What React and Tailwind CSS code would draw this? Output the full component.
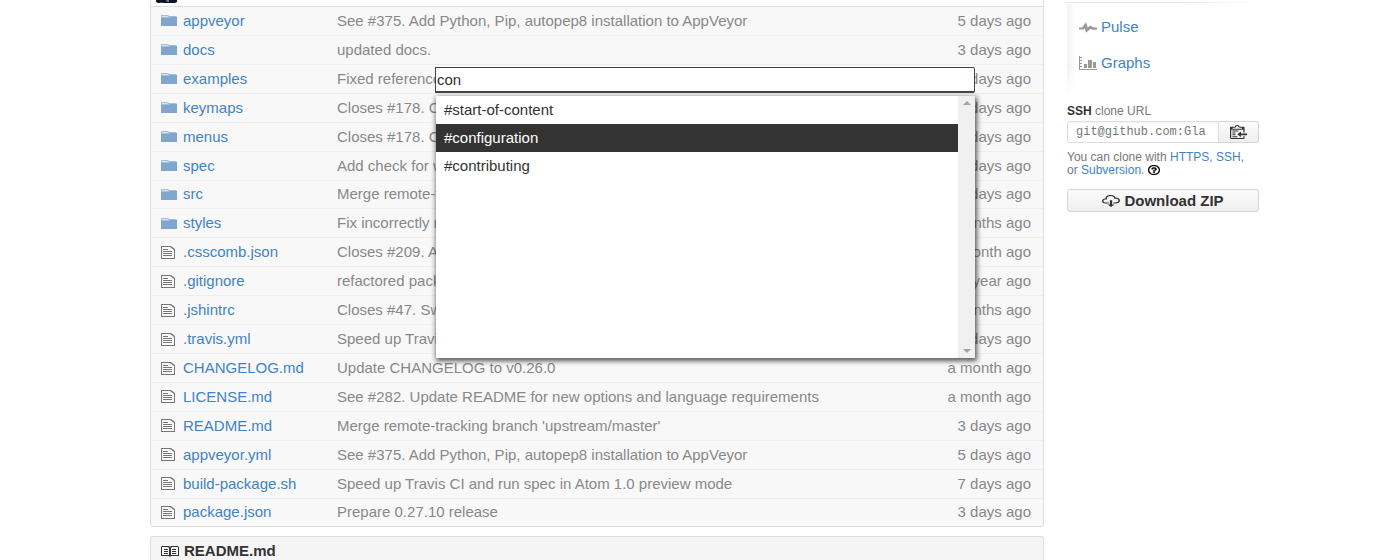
import React from "react";

const ICONS = {
  file: {
    box: "0 0 14 13",
    d: "M0 0h10l4 3v10H0zM1 1v11h12V4L9 1zM2 3h5v1H2zM2 5h9v1H2zM2 7h9v1H2zM2 9h9v1H2z",
  },
  pulse: {
    box: "0 1 14 13",
    d: "M11.5 7.5L8.8 5 6.8 7.6 5.5 1.2 2.4 7.5H0v2.3h3.7l.8-1.6.9 5.4L9 9l1.4 1.3H14V7.5h-2.5z",
  },
  graph: {
    box: "0 0 18 14",
    d: "M0 13h18v1H0zM0 0h1v13H0zM1 1h2v1H1zM1 4h2v1H1zM1 7h2v1H1zM1 10h2v1H1zM5 8h3v4H5zM9 4h4v8H9zM14 6h3v6h-3z",
  },
  book: {
    box: "0 0 18 11",
    d: "M1 0h7l1 1 1-1h7l1 1v9h-8l-1 1-1-1H0V1zM1 1v8h7V2L7 1zM10 2v7h7V1h-6zM3 3h4v1H3zM3 5h4v1H3zM3 7h4v1H3zM11 3h4v1h-4zM11 5h4v1h-4zM11 7h4v1h-4z",
  },
  clippy: {
    box: "0 1 14 15",
    d: "M2 13h4v1H2v-1zm5-6H2v1h5V7zm2 3V8l-3 3 3 3v-2h5v-2H9zM4.5 9H2v1h2.5V9zM2 12h2.5v-1H2v1zm9 1h1v2c-.02.28-.11.52-.3.7-.19.18-.42.28-.7.3H1c-.55 0-1-.45-1-1V4c0-.55.45-1 1-1h3c0-1.11.89-2 2-2s2 .89 2 2h3c.55 0 1 .45 1 1v5h-1V6H1v9h10v-2zM2 5h8c0-.55-.45-1-1-1H8c-.55 0-1-.45-1-1s-.45-1-1-1-1 .45-1 1-.45 1-1 1H3c-.55 0-1 .45-1 1z",
  },
  cloud: {
    box: "0 1 16 14",
    d: "M9 12h2l-3 3-3-3h2V7h2v5zm3-8c0-.44-.91-3-4.5-3C5.08 1 3 2.92 3 5 1.02 5 0 6.52 0 8c0 1.53 1 3 3 3h3V9.7H3C1.38 9.7 1.3 8.28 1.3 8c0-.17.05-1.7 1.7-1.7h1.3V5c0-1.39 1.56-2.7 3.2-2.7 2.55 0 3.13 1.55 3.2 1.8v1.2H12c.81 0 2.7.22 2.7 2.2 0 2.09-2.25 2.2-2.7 2.2h-2V11h2c2.08 0 4-1.16 4-3.5C16 5.06 14.08 4 12 4z",
  },
  question: {
    box: "0 1 14 14",
    d: "M6 10h2v2H6v-2zm4-3.5C10 8.64 8 9 8 9H6c0-.55.45-1 1-1h.5c.28 0 .5-.22.5-.5v-1c0-.28-.22-.5-.5-.5h-1c-.28 0-.5.22-.5.5V7H4c0-1.5 1.5-3 3-3s3 1 3 2.5zM7 2.3c3.14 0 5.7 2.56 5.7 5.7s-2.56 5.7-5.7 5.7A5.71 5.71 0 0 1 1.3 8c0-3.14 2.56-5.7 5.7-5.7zM7 1C3.14 1 0 4.14 0 8s3.14 7 7 7 7-3.14 7-7-3.14-7-7-7z",
  },
};

function Icon({ name, className }) {
  const icon = ICONS[name];
  return (
    <svg
      viewBox={icon.box}
      preserveAspectRatio="none"
      fill="currentColor"
      fillRule="evenodd"
      aria-hidden="true"
      className={className}
    >
      <path d={icon.d} />
    </svg>
  );
}

function FolderIcon() {
  return (
    <svg viewBox="0 0 16 11" aria-hidden="true" className="h-[11px] w-4">
      <path d="M0 0h7l1 1h7l1 1v2H0z" fill="#a3bfdc" />
      <path d="M1 1h6v1H1z" fill="#d8e4f0" />
      <path d="M0 3h8l1-1h7v9H0z" fill="#80a6cd" />
    </svg>
  );
}

const FILES = [
  ["folder", "appveyor", "See #375. Add Python, Pip, autopep8 installation to AppVeyor", "5 days ago"],
  ["folder", "docs", "updated docs.", "3 days ago"],
  ["folder", "examples", "Fixed reference", "3 days ago"],
  ["folder", "keymaps", "Closes #178. C", "3 days ago"],
  ["folder", "menus", "Closes #178. C", "3 days ago"],
  ["folder", "spec", "Add check for w", "3 days ago"],
  ["folder", "src", "Merge remote-t", "3 days ago"],
  ["folder", "styles", "Fix incorrectly r", "2 months ago"],
  ["file", ".csscomb.json", "Closes #209. A", "a month ago"],
  ["file", ".gitignore", "refactored pack", "a year ago"],
  ["file", ".jshintrc", "Closes #47. Sw", "9 months ago"],
  ["file", ".travis.yml", "Speed up Travi", "7 days ago"],
  ["file", "CHANGELOG.md", "Update CHANGELOG to v0.26.0", "a month ago"],
  ["file", "LICENSE.md", "See #282. Update README for new options and language requirements", "a month ago"],
  ["file", "README.md", "Merge remote-tracking branch 'upstream/master'", "3 days ago"],
  ["file", "appveyor.yml", "See #375. Add Python, Pip, autopep8 installation to AppVeyor", "5 days ago"],
  ["file", "build-package.sh", "Speed up Travis CI and run spec in Atom 1.0 preview mode", "7 days ago"],
  ["file", "package.json", "Prepare 0.27.10 release", "3 days ago"],
];

function FileTable() {
  return (
    <table className="h-[519px] w-full table-fixed border-separate border-spacing-0 bg-[#f8f8f8]">
      <colgroup>
        <col className="w-[186px]" />
        <col />
        <col className="w-[130px]" />
      </colgroup>
      <tbody>
        {FILES.map(([kind, name, message, age]) => (
          <tr key={name} className="group">
            <td className="border-b border-[#eeeeee] p-0 pl-[10px] group-last:border-b-0">
              <span className="flex items-center gap-[6px]">
                <span className="flex w-4 shrink-0">
                  {kind === "folder" ? (
                    <FolderIcon />
                  ) : (
                    <Icon name="file" className="h-[13px] w-[14px] text-[#777777]" />
                  )}
                </span>
                <a href="#file" className="text-[#4183c4]">{name}</a>
              </span>
            </td>
            <td className="truncate border-b border-[#eeeeee] p-0 text-[#888888] group-last:border-b-0">
              {message}
            </td>
            <td className="border-b border-[#eeeeee] p-0 pr-3 text-right text-[#888888] group-last:border-b-0">
              {age}
            </td>
          </tr>
        ))}
      </tbody>
    </table>
  );
}

function AnchorPicker() {
  const options = ["#start-of-content", "#configuration", "#contributing"];
  return (
    <div className="absolute top-[67px] left-[285px] w-[540px] text-[#333333]">
      <input
        type="text"
        aria-label="Anchor"
        defaultValue="con"
        className="block h-[26px] w-full rounded-r-[2px] border border-b-2 border-[#444444] bg-white p-0 pb-px pl-px outline-none"
      />
      <div className="mt-[3px] ml-px flex h-[262px] bg-white shadow-[1px_2px_5px_1px_rgba(0,0,0,0.65)]">
        <ul role="listbox" aria-label="Matching anchors" className="flex-1">
          {options.map((option) => {
            const active = option === "#configuration";
            return (
              <li
                key={option}
                role="option"
                aria-selected={active}
                className={
                  active
                    ? "h-7 bg-[#333333] px-2 leading-7 text-white"
                    : "h-7 px-2 leading-7"
                }
              >
                {option}
              </li>
            );
          })}
        </ul>
        <div className="flex w-[17px] flex-col items-center justify-between bg-[#f0f0f0] py-[5px]" aria-hidden="true">
          <svg viewBox="0 0 8 4" className="h-1 w-2 text-[#a3a3a3]" fill="currentColor">
            <path d="M0 4L4 0l4 4z" />
          </svg>
          <svg viewBox="0 0 8 4" className="h-1 w-2 text-[#a3a3a3]" fill="currentColor">
            <path d="M0 0l4 4 4-4z" />
          </svg>
        </div>
      </div>
    </div>
  );
}

function Sidebar() {
  return (
    <aside className="text-xs text-[#777777]">
      <nav className="relative h-[95px] pl-3 text-[15px]">
        <div className="absolute top-0 left-0 h-full w-2 bg-linear-to-r from-[#f0f0f0] to-white mask-b-from-70%" />
        <div className="absolute top-0 left-0 h-[4px] w-full bg-white">
          <div className="mt-[2px] h-px bg-linear-to-r from-[#e8e8e8] from-60% to-white" />
        </div>
        <div className="flex flex-col gap-4 pt-[17px] leading-5">
          <a href="#pulse" className="flex items-center gap-1 text-[#4183c4]">
            <Icon name="pulse" className="h-[11px] w-[18px] text-[#999999]" />
            Pulse
          </a>
          <a href="#graphs" className="flex items-center gap-1 text-[#4183c4]">
            <Icon name="graph" className="h-[14px] w-[18px] text-[#999999]" />
            Graphs
          </a>
        </div>
      </nav>
      <label htmlFor="clone-url" className="mt-2 block leading-4">
        <b className="text-[#333333]">SSH</b> clone URL
      </label>
      <div className="mt-[2px] flex h-[22px]">
        <input
          id="clone-url"
          readOnly
          defaultValue="git@github.com:Gla"
          className="min-w-0 flex-1 rounded-l-[3px] border border-[#dddddd] bg-white px-2 font-['Liberation_Mono',monospace] text-[12px] text-[#777777] shadow-[inset_0_1px_2px_rgba(0,0,0,0.05)] outline-none"
        />
        <button
          type="button"
          aria-label="Copy to clipboard"
          className="flex w-10 items-center justify-center rounded-r-[3px] border border-l-0 border-[#d5d5d5] bg-linear-to-b from-[#fcfcfc] to-[#eeeeee] text-[#333333]"
        >
          <Icon name="clippy" className="h-[14px] w-[17px]" />
        </button>
      </div>
      <p className="mt-2 leading-[13px]">
        You can clone with <a href="#https" className="text-[#4183c4]">HTTPS</a>,{" "}
        <a href="#ssh" className="text-[#4183c4]">SSH</a>,
        <br />
        or <a href="#subversion" className="text-[#4183c4]">Subversion</a>.{" "}
        <a href="#help" aria-label="Help" className="text-black">
          <Icon name="question" className="inline h-[10px] w-3 stroke-current stroke-[0.4px] align-[-1px]" />
        </a>
      </p>
      <button
        type="button"
        className="mt-3 flex h-[23px] w-full items-center justify-center gap-1 rounded-[3px] border border-[#d5d5d5] bg-linear-to-b from-[#fcfcfc] to-[#eeeeee] text-[15px] font-bold text-[#333333]"
      >
        <Icon name="cloud" className="h-3 w-[18px]" />
        Download ZIP
      </button>
    </aside>
  );
}

export default function App() {
  return (
    <div className="grid grid-cols-[minmax(0,1fr)_192px] gap-[23px] bg-white pr-[141px] pl-[150px] font-['Liberation_Sans',Arial,sans-serif] text-[15px] leading-4">
      <main className="relative">
        <section className="overflow-hidden rounded-b-[3px] border border-t-0 border-[#dddddd]">
          <div className="h-[7px] border-b border-[#cfe3ec] bg-white pl-1">
            <svg viewBox="0 0 23 3" className="h-[3px] w-[23px]" aria-hidden="true">
              <path d="M1 0h21v2l-2 1H3L1 2z" fill="#11151f" />
              <path d="M11 0h3v2h-2z" fill="#4f79b5" />
              <path d="M5 2h3v1H5z" fill="#4c4c50" />
            </svg>
          </div>
          <FileTable />
        </section>
        <section className="mt-[9px] rounded-t-[3px] border border-b-0 border-[#dddddd] bg-[#f5f5f5]">
          <h2 className="flex h-[23px] items-center gap-[5px] pt-[5px] pl-[10px] text-[15px] font-bold text-[#333333]">
            <Icon name="book" className="h-[11px] w-[18px]" />
            README.md
          </h2>
        </section>
        <AnchorPicker />
      </main>
      <Sidebar />
    </div>
  );
}
